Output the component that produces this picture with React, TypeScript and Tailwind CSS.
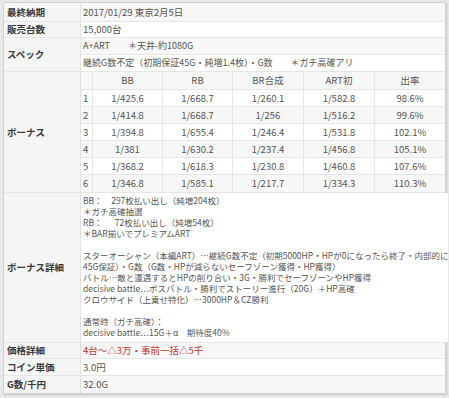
const font = { fontFamily: '"Noto Sans CJK JP", "Noto Sans", sans-serif' };

const bonusRows = [
  ["1", "1/425.6", "1/668.7", "1/260.1", "1/582.8", "98.6%"],
  ["2", "1/414.8", "1/668.7", "1/256", "1/516.2", "99.6%"],
  ["3", "1/394.8", "1/655.4", "1/246.4", "1/531.8", "102.1%"],
  ["4", "1/381", "1/630.2", "1/237.4", "1/456.8", "105.1%"],
  ["5", "1/368.2", "1/618.3", "1/230.8", "1/460.8", "107.6%"],
  ["6", "1/346.8", "1/585.1", "1/217.7", "1/334.3", "110.3%"],
];

const detailLines = [
  "BB：　297枚払い出し（純増204枚）",
  "＊ガチ高確抽選",
  "RB：　\u00a0\u00a072枚払い出し（純増54枚）",
  "＊BAR揃いでプレミアムART",
  "",
  "スターオーシャン（本編ART）…継続G数不定（初期5000HP・HPが0になったら終了・内部的に",
  "45G保証）・G数（G数・HPが減らないセーフゾーン獲得・HP獲得）",
  "バトル…敵と遭遇するとHPの削り合い・3G・勝利でセーフゾーンやHP獲得",
  "decisive battle…ボスバトル・勝利でストーリー進行（20G）＋HP高確",
  "クロウサイド（上乗せ特化）…3000HP＆CZ勝利",
  "",
  "通常時（ガチ高確）：",
  "decisive battle…15G＋α　期待度40%",
];

function Label({ children }: { children: React.ReactNode }) {
  return (
    <div className="flex items-center pl-[3px] bg-[#f5f5f5] border-r border-[#e2e2e2] text-[9.5px] font-bold text-[#3a3a3a] whitespace-nowrap">
      {children}
    </div>
  );
}

function Row({
  label,
  h,
  stripe,
  last,
  children,
}: {
  label: string;
  h: string;
  stripe?: boolean;
  last?: boolean;
  children: React.ReactNode;
}) {
  return (
    <div className={`grid grid-cols-[77px_1fr] ${h} ${last ? "" : "border-b border-[#e6e6e6]"}`}>
      <Label>{label}</Label>
      <div className={`flex items-center pl-[2px] text-[9.5px] text-[#555] whitespace-nowrap ${stripe ? "bg-[#f7f7f7]" : "bg-white"}`}>
        {children}
      </div>
    </div>
  );
}

function BonusTable() {
  const head = ["", "BB", "RB", "BR合成", "ART初", "出率"];
  return (
    <div className="flex flex-col text-[9.5px] text-[#555]">
      <div className="grid grid-cols-[12px_70px_70px_71px_71px_1fr] h-[18px] bg-[#f7f7f7] border-b border-[#e6e6e6]">
        {head.map((c, i) => (
          <div key={i} className={`flex items-center justify-center ${i < 5 ? "border-r border-[#e6e6e6]" : ""}`}>
            {c}
          </div>
        ))}
      </div>
      {bonusRows.map((r, ri) => (
        <div
          key={ri}
          className={`grid grid-cols-[12px_70px_70px_71px_71px_1fr] h-[17px] ${ri % 2 === 1 ? "bg-[#f7f7f7]" : "bg-white"} ${ri < 5 ? "border-b border-[#e6e6e6]" : ""}`}
        >
          {r.map((c, i) => (
            <div
              key={i}
              className={`flex items-center ${i === 0 ? "pl-[2px]" : "justify-center"} ${i < 5 ? "border-r border-[#e6e6e6]" : ""}`}
            >
              {c}
            </div>
          ))}
        </div>
      ))}
    </div>
  );
}

export default function App() {
  return (
    <div className="w-[449px] h-[398px] bg-[#e9e9e9] pt-[2px] px-[3px] overflow-hidden" style={font}>
      <div className="bg-white border border-[#d2d2d2] shadow-[1px_1px_2px_rgba(0,0,0,0.15)]">
        <Row label="最終納期" h="h-[19px]" stripe>
          2017/01/29 東京2月5日
        </Row>
        <Row label="販売台数" h="h-[16px]">
          15,000台
        </Row>

        <div className="grid grid-cols-[77px_1fr] border-b border-[#e6e6e6]">
          <Label>スペック</Label>
          <div className="flex flex-col text-[9px] text-[#555] whitespace-nowrap">
            <div className="h-[17px] flex items-center pl-[2px] bg-[#f7f7f7] border-b border-[#e6e6e6]">
              A+ART　　＊天井-約1080G
            </div>
            <div className="h-[16px] flex items-center pl-[2px] bg-white">
              継続G数不定（初期保証45G・純増1.4枚）・G数　　＊ガチ高確アリ
            </div>
          </div>
        </div>

        <div className="grid grid-cols-[77px_1fr] border-b border-[#e6e6e6]">
          <Label>ボーナス</Label>
          <BonusTable />
        </div>

        <div className="grid grid-cols-[77px_1fr] h-[150px] border-b border-[#e6e6e6]">
          <Label>ボーナス詳細</Label>
          <div className="flex flex-col pt-[2px] pl-[2px] bg-white text-[8.5px] leading-[11px] text-[#555] whitespace-nowrap">
            {detailLines.map((l, i) => (
              <div key={i} className="h-[11px]">
                {l}
              </div>
            ))}
          </div>
        </div>

        <Row label="価格詳細" h="h-[16px]" stripe>
          <span className="text-[#c0392b]">4台～△3万・事前一括△5千</span>
        </Row>
        <Row label="コイン単価" h="h-[17px]">
          3.0円
        </Row>
        <Row label="G数/千円" h="h-[17px]" stripe last>
          32.0G
        </Row>
      </div>
    </div>
  );
}
